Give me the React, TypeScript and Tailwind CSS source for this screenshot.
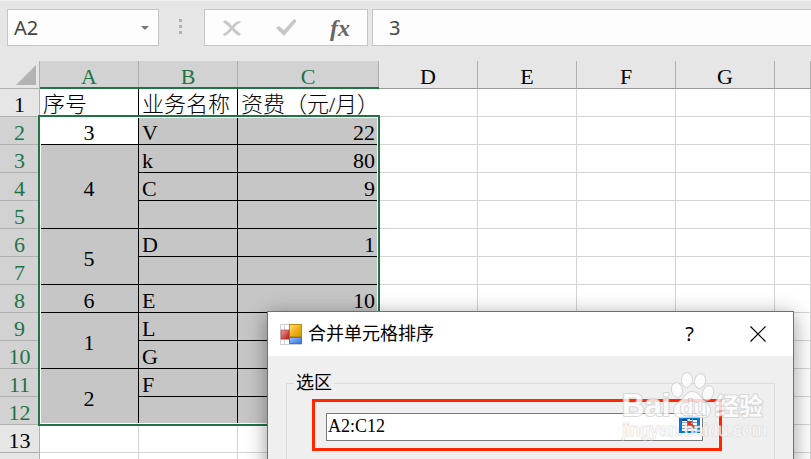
import { clsx } from 'clsx';

type Row = {
  n: number;
  a?: string;
  span?: number;
  b?: string;
  c?: string;
};

// Column A holds merged cells: `span` is set on the first row of each merge
const rows: Row[] = [
  { n: 2, a: '3', span: 1, b: 'V', c: '22' },
  { n: 3, a: '4', span: 3, b: 'k', c: '80' },
  { n: 4, b: 'C', c: '9' },
  { n: 5 },
  { n: 6, a: '5', span: 2, b: 'D', c: '1' },
  { n: 7 },
  { n: 8, a: '6', span: 1, b: 'E', c: '10' },
  { n: 9, a: '1', span: 2, b: 'L' },
  { n: 10, b: 'G' },
  { n: 11, a: '2', span: 2, b: 'F' },
  { n: 12 },
];

const columns = ['A', 'B', 'C', 'D', 'E', 'F', 'G', ''];

const cell = 'h-7 border-r border-b p-0 pt-1 font-light leading-[23px] whitespace-nowrap';
const plain = 'border-[#d4d4d4] bg-white';
const filled = 'border-black bg-[#c6c6c6]';

function Toolbar() {
  const box = 'flex h-[37px] items-center border border-[#c6c6c6] bg-[#fdfdfd]';
  return (
    <div className="flex h-[61px] items-start border-t border-[#efefef] pt-2 pl-[7px] font-['Noto_Sans',sans-serif] text-xl text-[#444]">
      <div className={clsx(box, 'w-[152px] pr-[9px] pl-1.5')}>
        <input aria-label="Name box" defaultValue="A2" className="min-w-0 flex-1 bg-transparent outline-none" />
        <button aria-label="Open name list">
          <svg width="8" height="4" viewBox="0 0 8 4" fill="#777">
            <path d="M0 0h8L4 4z" />
          </svg>
        </button>
      </div>
      <div className="flex h-[35px] w-[45px] items-center justify-center pr-0.5">
        <svg width="3" height="15" fill="#b0b0b0">
          <path d="M0 0h3v3H0zM0 6h3v3H0zM0 12h3v3H0z" />
        </svg>
      </div>
      <div className={clsx(box, 'w-[164px] justify-between pr-[17px] pl-[18px]')}>
        <button aria-label="Cancel">
          <svg width="18" height="16" viewBox="0 0 18 16" fill="#c8c8c8">
            <path d="M0 2 2 0Q6 2 9 6 13 1 17 1l1 1Q14 4 11 8q4 4 7 6l-2 2q-4-2-7-6-4 5-8 6l-1-2q4-2 7-6Q4 5 0 2z" />
          </svg>
        </button>
        <button aria-label="Enter">
          <svg width="20" height="17" viewBox="0 0 20 17" fill="#c8c8c8">
            <path d="M0 9l3-2 5 4L18 0l2 1v2L8 17z" />
          </svg>
        </button>
        <button
          aria-label="Insert function"
          className="font-['Liberation_Serif',serif] text-2xl leading-6 font-bold text-[#666] italic"
        >
          fx
        </button>
      </div>
      <input
        aria-label="Formula bar"
        defaultValue="3"
        className={clsx(box, 'ml-1 min-w-0 flex-1 border-r-0 pl-4 outline-none')}
      />
    </div>
  );
}

function Sheet() {
  return (
    <div className="relative">
      <table className="w-full table-fixed border-separate border-spacing-0 font-['Liberation_Serif','Noto_Sans_CJK_SC',serif] text-[22px] text-black">
        <colgroup>
          <col className="w-10" />
          <col className="w-[99px]" />
          <col className="w-[99px]" />
          <col className="w-[141px]" />
          <col className="w-[99px]" />
          <col className="w-[99px]" />
          <col className="w-[99px]" />
          <col className="w-[99px]" />
          <col />
        </colgroup>
        <thead>
          <tr>
            <th className="h-7 border-r border-b border-[#b0b0b0] p-0">
              <svg className="ml-4" width="20" height="20" fill="#b3b3b3">
                <path d="M20 0v20H0z" />
              </svg>
            </th>
            {columns.map((name, i) => (
              <th
                key={i}
                className={clsx(
                  cell,
                  i < 3
                    ? 'border-r-[#b0b0b0] border-b-[#217346] bg-[#d2d2d2] text-[#217346]'
                    : 'border-r-[#b0b0b0] border-b-[#999]',
                )}
              >
                {name}
              </th>
            ))}
          </tr>
        </thead>
        <tbody>
          <tr>
            <th className={clsx(cell, 'border-[#b0b0b0]')}>1</th>
            <td className={clsx(cell, 'border-black bg-white pl-[3px]')}>序号</td>
            <td className={clsx(cell, 'border-black bg-white pl-[3px]')}>业务名称</td>
            <td className={clsx(cell, 'border-white bg-white pl-[3px]')}>资费（元/月）</td>
            {[4, 5, 6, 7, 8].map((i) => (
              <td key={i} className={clsx(cell, plain)} />
            ))}
          </tr>
          {rows.map((row) => (
            <tr key={row.n}>
              <th className={clsx(cell, 'border-[#b0b0b0] bg-[#d2d2d2] text-[#217346]')}>{row.n}</th>
              {row.span && (
                <td
                  rowSpan={row.span}
                  className={clsx(cell, 'border-black text-center', row.n === 2 ? 'bg-white' : 'bg-[#c6c6c6]')}
                >
                  {row.a}
                </td>
              )}
              <td className={clsx(cell, filled, 'pl-[3px]')}>{row.b}</td>
              <td className={clsx(cell, filled, 'pr-[3px] text-right')}>{row.c}</td>
              {[4, 5, 6, 7, 8].map((i) => (
                <td key={i} className={clsx(cell, plain)} />
              ))}
            </tr>
          ))}
          {['13', ''].map((n) => (
            <tr key={n}>
              <th className={clsx(cell, 'border-[#b0b0b0]')}>{n}</th>
              {columns.map((_, i) => (
                <td key={i} className={clsx(cell, plain)} />
              ))}
            </tr>
          ))}
        </tbody>
      </table>
      {/* selection frame and the header underline above it */}
      <div className="absolute top-[26px] left-10 h-0.5 w-[339px] bg-[#217346]" />
      <div className="absolute top-[54px] left-[38px] h-[311px] w-[342px] border-2 border-[#217346]">
        <div className="h-full border border-white" />
      </div>
    </div>
  );
}

function FormIcon() {
  return (
    <svg width="22" height="21" viewBox="0 0 22 21">
      <defs>
        <linearGradient id="gold" x2="1" y2="1">
          <stop stopColor="#ffe48a" />
          <stop offset=".5" stopColor="#efb41a" />
          <stop offset="1" stopColor="#d79400" />
        </linearGradient>
        <linearGradient id="red" x2="1" y2="1">
          <stop stopColor="#f0a0a0" />
          <stop offset="1" stopColor="#b01818" />
        </linearGradient>
        <linearGradient id="blue" x2="1" y2="1">
          <stop stopColor="#9cc4ff" />
          <stop offset="1" stopColor="#2f6fe0" />
        </linearGradient>
      </defs>
      <path d="M.5.5h21v20H.5zM4.500.5v20M.5 15.500h9" fill="#fff" stroke="#d0d0d0" />
      <rect x="9.500" y=".5" width="12" height="12" fill="url(#gold)" stroke="#c08a10" />
      <rect x="1" y="6" width="8" height="9" fill="url(#red)" stroke="#b03030" strokeWidth=".6" />
      <rect x="9.500" y="13.500" width="12" height="6" fill="url(#blue)" stroke="#3f74d0" />
    </svg>
  );
}

function RangeIcon() {
  return (
    <svg width="21" height="17" viewBox="0 0 21 17">
      <path d="M0 0h21v17H0z" fill="#0078d7" />
      <path d="M0 0h21v2H0z" fill="#a8d4f5" />
      <path d="M3 3h15v12H3z" fill="#fff" />
      <path d="M3 3h6v2H3zM11 3h7v1h-7z" fill="#1d3f8c" />
      <path d="M3 6.500h15M3 9.500h15M3 12.500h15M8.500 3v12M13.500 3v12" stroke="#8aa0c8" />
      <path d="M8 5h6l-2 2 4 4-2 2-4-4-2 2z" fill="#d8301c" />
    </svg>
  );
}

function SortDialog() {
  return (
    <div
      role="dialog"
      aria-labelledby="dialog-title"
      className="absolute top-[311px] left-[267px] w-[527px] border border-[#707070] bg-[#efefef] font-['Liberation_Serif','Noto_Sans_CJK_SC',serif] text-lg text-black shadow-[0_4px_20px_rgba(0,0,0,0.4)]"
    >
      <div className="flex h-11 items-center bg-white pr-[27px] pl-3">
        <FormIcon />
        <h1 id="dialog-title" className="ml-1.5 flex-1 leading-6">
          合并单元格排序
        </h1>
        <button aria-label="Help" className="mr-14 font-['Noto_Sans',sans-serif] text-xl leading-6">
          ?
        </button>
        <button aria-label="Close">
          <svg width="16" height="16" stroke="#000" strokeWidth="1.2">
            <path d="M.5.5l15 15M15.500.5l-15 15" />
          </svg>
        </button>
      </div>
      <div className="px-[18px] pt-[15px] pb-5">
        <fieldset className="border border-[#dcdcdc] pr-[52px] pb-10 pl-[25px]">
          <legend className="-ml-[18px] px-0.5 leading-6">
            <label htmlFor="range">选区</label>
          </legend>
          <div className="mt-1 border-3 border-[#ff2600] pt-[11px] pr-4 pb-[7px] pl-[11px]">
            <div className="flex h-7 items-start border border-[#7a7a7a] bg-white pr-0.5 pl-px">
              <input id="range" defaultValue="A2:C12" className="min-w-0 flex-1 bg-transparent leading-6 outline-none" />
              <button aria-label="Select range" className="mt-0.5">
                <RangeIcon />
              </button>
            </div>
          </div>
        </fieldset>
      </div>
    </div>
  );
}

function Watermark() {
  return (
    <svg
      className="pointer-events-none absolute top-[365px] left-[610px] opacity-80"
      width="160"
      height="90"
      fill="#fff"
      stroke="#d0d0d0"
      strokeWidth="2"
      strokeLinejoin="round"
      paintOrder="stroke"
      fontFamily="'Liberation Sans', 'Noto Sans CJK SC', sans-serif"
    >
      <ellipse cx="77" cy="15" rx="5" ry="7" />
      <ellipse cx="90" cy="16" rx="5" ry="7" transform="rotate(12 90 16)" />
      <ellipse cx="67" cy="25" rx="5" ry="7" transform="rotate(-12 67 25)" />
      <ellipse cx="98" cy="28" rx="5" ry="7" transform="rotate(18 98 28)" />
      <path d="M82 27c5 0 7 3 10 7 4 4 8 6 8 11 0 6-4 8-9 7-6-1-12-1-18 0-5 1-9-2-9-7s5-7 9-11c3-4 5-7 9-7z" />
      <text x="12" y="51" fontSize="31" fontWeight="bold">
        Bai
      </text>
      <text x="70" y="50" fontSize="22" fontWeight="bold">
        du
      </text>
      <text x="105" y="50" fontSize="24" fontWeight="bold">
        经验
      </text>
      <text x="12" y="71" fontSize="18" strokeWidth="1" fillOpacity=".9">
        jingyan.baidu.com
      </text>
    </svg>
  );
}

export default function App() {
  return (
    <div className="relative h-screen overflow-hidden bg-[#e6e6e6]">
      <Toolbar />
      <Sheet />
      <SortDialog />
      <Watermark />
    </div>
  );
}
